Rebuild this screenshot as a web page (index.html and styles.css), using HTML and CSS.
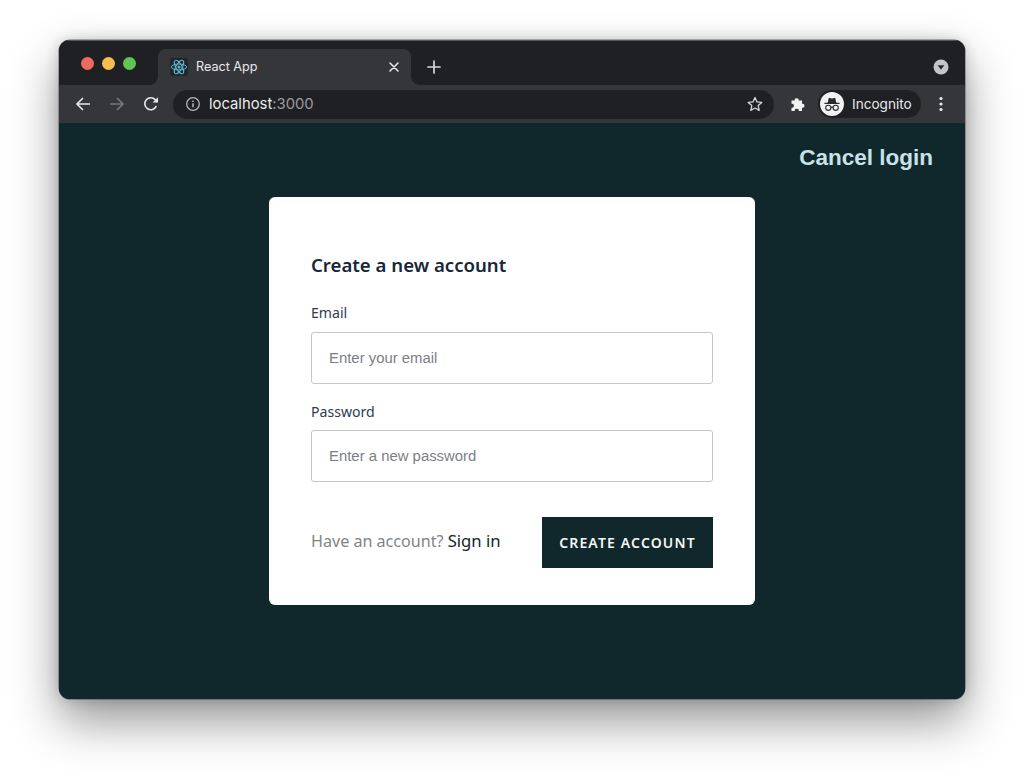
FILE: index.html
```html
<!DOCTYPE html>
<html lang="en">
<head>
<meta charset="utf-8">
<title>React App</title>
<link rel="stylesheet" href="styles.css">
</head>
<body>
<div class="window">
  <div class="titlebar">
    <div class="lights">
      <span class="light light-red"></span>
      <span class="light light-yellow"></span>
      <span class="light light-green"></span>
    </div>
    <div class="tab">
      <span class="favicon">
        <svg viewBox="0 0 18 18" width="18" height="18" fill="none" stroke="#5fb6d0" stroke-width="1">
          <ellipse cx="9" cy="9" rx="7.6" ry="3"/>
          <ellipse cx="9" cy="9" rx="7.6" ry="3" transform="rotate(60 9 9)"/>
          <ellipse cx="9" cy="9" rx="7.6" ry="3" transform="rotate(120 9 9)"/>
          <circle cx="9" cy="9" r="1.5" fill="#5fb6d0" stroke="none"/>
        </svg>
      </span>
      <span class="tab-title">React App</span>
      <svg class="tab-close" viewBox="0 0 10 10" width="10" height="10" stroke="#eceded" stroke-width="1.5" stroke-linecap="round">
        <path d="M1 1l8 8M9 1l-8 8"/>
      </svg>
    </div>
    <svg class="new-tab" viewBox="0 0 14 14" width="14" height="14" stroke="#d6d7d9" stroke-width="1.7" stroke-linecap="round">
      <path d="M7 1v12M1 7h12"/>
    </svg>
    <svg class="tab-search" viewBox="0 0 16 16" width="16" height="16">
      <circle cx="8" cy="8" r="7.5" fill="#c4c5c8"/>
      <path d="M4.6 6.2h6.8L8 10.8z" fill="#2a2b2e"/>
    </svg>
  </div>
  <div class="toolbar">
    <svg class="nav-icon" viewBox="0 0 16 16" width="16" height="16" fill="none" stroke="#e8e9ea" stroke-width="1.6">
      <path d="M15 8H2M8 2L2 8l6 6"/>
    </svg>
    <svg class="nav-icon nav-forward" viewBox="0 0 16 16" width="16" height="16" fill="none" stroke="#77797c" stroke-width="1.6">
      <path d="M1 8h13M8 2l6 6-6 6"/>
    </svg>
    <svg class="nav-icon nav-reload" viewBox="0 0 16 16" width="16" height="16" fill="none" stroke="#e8e9ea" stroke-width="1.6">
      <path d="M13.3 10.2A6 6 0 1 1 12.4 3.8L14.6 6"/>
      <path d="M15 1.2V6.6H9.6z" fill="#e8e9ea" stroke="none"/>
    </svg>
    <div class="omnibox">
      <svg class="info" viewBox="0 0 16 16" width="16" height="16" fill="none" stroke="#b5b6b8" stroke-width="1.3">
        <circle cx="8" cy="8" r="6.3"/>
        <path d="M8 7.2v4" stroke-width="1.5"/>
        <path d="M8 4.4v1.5" stroke-width="1.5"/>
      </svg>
      <span class="url"><span class="url-host">localhost</span>:3000</span>
      <svg class="star" viewBox="0 0 16 16" width="16" height="16" fill="none" stroke="#d3d4d6" stroke-width="1.3" stroke-linejoin="round">
        <path d="M8 1.4l2 4.5 4.8.5-3.6 3.2 1 4.8L8 12l-4.2 2.4 1-4.8L1.200 6.400l4.800-.5z"/>
      </svg>
    </div>
    <svg class="puzzle" viewBox="0 0 16 16" width="16" height="16" fill="#f1f2f2">
      <path d="M1 5h3.200a2 2 0 1 1 3.900 0h3.400v3.200a2 2 0 1 1 0 3.900V15.500H8.200a2 2 0 1 0-3.900 0H1v-3.400a2 2 0 1 0 0-3.900z" transform="translate(.5 -.4)"/>
    </svg>
    <div class="profile">
      <span class="avatar">
        <svg viewBox="0 0 24 24" width="24" height="24" fill="none" stroke="#2a2b2e">
          <path d="M7.600 11l1-4.500q.2-.8 1-.6l2.400.6 2.400-.6q.8-.2 1 .6l1 4.500z" fill="#2a2b2e" stroke="none"/>
          <path d="M4.500 11.300h15" stroke-width="1.300"/>
          <circle cx="8.300" cy="15.800" r="2.600" stroke-width="1.100"/>
          <circle cx="15.700" cy="15.800" r="2.600" stroke-width="1.100"/>
          <path d="M10.900 15.500q1.100-.7 2.200 0" stroke-width="1.100"/>
        </svg>
      </span>
      <span class="profile-name">Incognito</span>
    </div>
    <svg class="menu" viewBox="0 0 4 16" width="4" height="16" fill="#e8e9ea">
      <circle cx="2" cy="2.500" r="1.600"/>
      <circle cx="2" cy="8" r="1.600"/>
      <circle cx="2" cy="13.500" r="1.600"/>
    </svg>
  </div>
  <main class="page">
    <div class="page-header">
      <a class="cancel" href="#">Cancel login</a>
    </div>
    <form class="card">
      <h1 class="card-title">Create a new account</h1>
      <label class="field-label" for="email">Email</label>
      <input class="field-input" id="email" type="text" placeholder="Enter your email">
      <label class="field-label field-label-next" for="password">Password</label>
      <input class="field-input" id="password" type="text" placeholder="Enter a new password">
      <div class="card-footer">
        <span class="signin-text">Have an account? <a class="signin-link" href="#">Sign in</a></span>
        <button class="submit" type="button">CREATE ACCOUNT</button>
      </div>
    </form>
  </main>
</div>
</body>
</html>
```

FILE: styles.css
```css
* { box-sizing: border-box; }

html, body { margin: 0; height: 100%; }

body {
  background: #fff;
  padding: 40px 59px 0;
  overflow: hidden;
  font-family: "Noto Sans", sans-serif;
}

.window {
  width: 906px;
  height: 659px;
  border-radius: 11px;
  overflow: hidden;
  display: flex;
  flex-direction: column;
  background: #10272b;
  box-shadow: 0 22px 48px rgba(0, 0, 0, .42), 0 0 14px rgba(0, 0, 0, .18), 0 0 0 .5px rgba(0, 0, 0, .5);
}

.titlebar {
  height: 45px;
  flex: none;
  display: flex;
  align-items: flex-end;
  background: #1f2023;
  border-top: 1px solid #55565a;
  position: relative;
}

.lights {
  width: 99px;
  height: 44px;
  padding: 16px 0 0 22px;
  display: flex;
  gap: 8px;
  align-items: flex-start;
}

.light {
  width: 13px;
  height: 13px;
  border-radius: 50%;
}
.light-red { background: #ee6a5e; }
.light-yellow { background: #f5bd4f; }
.light-green { background: #61c454; }

.tab {
  width: 253px;
  height: 36px;
  background: #35363a;
  border-radius: 8px 8px 0 0;
  display: flex;
  align-items: center;
  padding: 0 12px;
  color: #e8e9ea;
  position: relative;
}
.tab::before {
  content: "";
  position: absolute;
  left: -8px;
  bottom: 0;
  width: 8px;
  height: 8px;
  background: radial-gradient(circle at 0 0, transparent 7.5px, #35363a 8px);
}
.tab::after {
  content: "";
  position: absolute;
  right: -8px;
  bottom: 0;
  width: 8px;
  height: 8px;
  background: radial-gradient(circle at 100% 0, transparent 7.5px, #35363a 8px);
}

.favicon {
  width: 18px;
  height: 18px;
  background: #20262b;
  border-radius: 2px;
  display: block;
  flex: none;
}
.favicon svg { display: block; }

.tab-title {
  margin-left: 8px;
  font: 12.600px/16px Inter, sans-serif;
  flex: 1;
}

.tab-close { flex: none; }

.new-tab { flex: none; margin: 0 0 11px 16px; }

.tab-search { flex: none; margin: 0 16px 10px auto; }

.toolbar {
  height: 38px;
  flex: none;
  background: #35363a;
  display: flex;
  align-items: center;
  padding-left: 15.500px;
}

.nav-icon { flex: none; }
.nav-forward { margin-left: 18px; }
.nav-reload { margin-left: 18px; }

.omnibox {
  width: 601px;
  height: 29px;
  margin-left: 14.500px;
  border-radius: 15px;
  background: #1f2023;
  display: flex;
  align-items: center;
  padding: 0 11px 0 12px;
}

.info { flex: none; }

.url {
  margin-left: 8px;
  flex: 1;
  font: 14.800px/18px Inter, sans-serif;
  color: #9a9b9e;
}
.url-host { color: #eceded; }

.star { flex: none; }

.puzzle { flex: none; margin-left: 16px; }

.profile {
  width: 103px;
  height: 28px;
  margin-left: 12px;
  border-radius: 14px;
  background: #1f2023;
  display: flex;
  align-items: center;
  padding-left: 1px;
}

.avatar {
  width: 24px;
  height: 24px;
  border-radius: 50%;
  background: #f1f2f2;
  flex: none;
  margin-left: 1px;
}
.avatar svg { display: block; }

.profile-name {
  margin-left: 8px;
  font: 13.600px/16px Inter, sans-serif;
  color: #e8e9ea;
}

.menu { flex: none; margin-left: 18px; }

.page {
  flex: 1;
  background: #10272b;
  display: flex;
  flex-direction: column;
  align-items: center;
}

.page-header {
  align-self: stretch;
  height: 74px;
  padding: 21px 32px 0 0;
  text-align: right;
}

.cancel {
  font: 700 22.500px/28px "Liberation Sans", Arial, sans-serif;
  color: #c8e2e7;
  text-decoration: none;
}

.card {
  width: 486px;
  height: 408px;
  background: #fff;
  border-radius: 6px;
  padding: 56px 42px 37px;
  display: flex;
  flex-direction: column;
}

.card-title {
  margin: 0;
  font: 600 18.600px/24px "Noto Sans", sans-serif;
  color: #16263a;
}

.field-label {
  display: block;
  margin: 26px 0 9px;
  font: 400 14.100px/20px "Noto Sans", sans-serif;
  color: #2e3d50;
}

.field-label-next { margin: 18px 0 8px; }

.field-input {
  display: block;
  width: 100%;
  height: 52px;
  padding: 0 17px;
  border: 1px solid #c4c6c8;
  border-radius: 3px;
  background: #fff;
  font: 14.900px/18px "Liberation Sans", Arial, sans-serif;
  outline: none;
}
.field-input::placeholder { color: #7c8085; opacity: 1; }

.card-footer {
  margin-top: 35px;
  display: flex;
  align-items: center;
  justify-content: space-between;
}

.signin-text {
  font: 400 16.100px/22px "Noto Sans", sans-serif;
  color: #7f8487;
  margin-bottom: 4px;
}

.signin-link {
  font-size: 16.700px;
  color: #10272b;
  text-decoration: none;
}

.submit {
  width: 171px;
  height: 51px;
  border: 0;
  background: #10272b;
  color: #f4f6f6;
  font: 600 14px/18px "Noto Sans", sans-serif;
  letter-spacing: 1.150px;
  padding: 0;
}
```
